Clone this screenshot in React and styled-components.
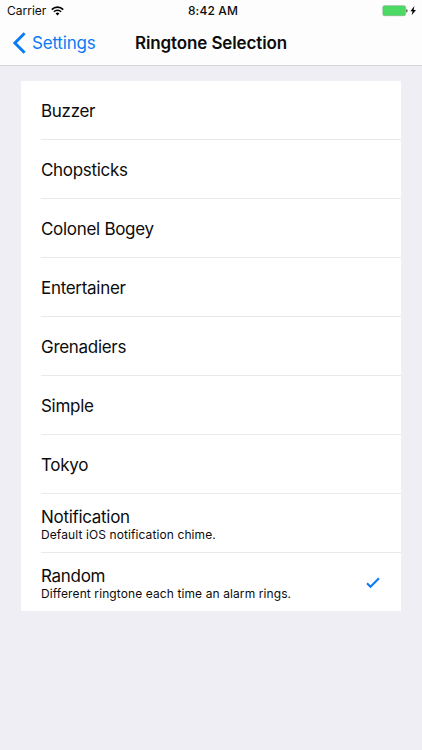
import React from 'react';
import styled, { createGlobalStyle } from 'styled-components';

const GlobalStyle = createGlobalStyle`
  * {
    box-sizing: border-box;
  }

  body {
    margin: 0;
    background-color: #efeef4;
    color: #0c0c0c;
    font-family: Inter, 'Liberation Sans', sans-serif;
  }
`;

const StyledScreen = styled.div`
  min-height: 750px;
  background-color: #efeef4;
`;

const StyledHeader = styled.header`
  height: 66px;
  background-color: #fdfdfd;
  border-bottom: 1px solid #d6d6da;
`;

const StyledStatusBar = styled.div`
  display: grid;
  grid-template-columns: 1fr auto 1fr;
  align-items: center;
  height: 22px;
  padding: 0 5px 0 7px;
  font-size: 12px;
  line-height: 22px;
`;

const StyledCarrier = styled.div`
  display: flex;
  align-items: center;
  gap: 5px;
`;

const StyledTime = styled.div`
  padding-left: 2px;
  font-weight: 500;
  letter-spacing: 0.15px;
`;

const StyledBattery = styled.div`
  display: flex;
  align-items: center;
  justify-content: flex-end;
`;

const StyledNavBar = styled.nav`
  display: grid;
  grid-template-columns: 1fr auto 1fr;
  align-items: center;
  height: 42px;
  padding: 0 13px;
`;

const StyledBack = styled.a`
  display: flex;
  align-items: center;
  gap: 6px;
  color: #0b7bf5;
  font-size: 17px;
  letter-spacing: -0.2px;
`;

const StyledTitle = styled.h1`
  margin: 0;
  font-size: 17px;
  font-weight: 600;
  letter-spacing: -0.12px;
`;

const StyledList = styled.ul`
  margin: 15px 21px 0;
  padding: 0 0 0 20px;
  background-color: #fff;
  list-style: none;
`;

const StyledRow = styled.li`
  display: flex;
  align-items: center;
  justify-content: space-between;
  height: 59px;
  padding: 2px 21px 0 0;
  border-bottom: 1px solid #e9e9eb;

  &:last-child {
    height: 58px;
    border-bottom: none;
  }
`;

const StyledName = styled.div`
  font-size: 17px;
  line-height: 20px;
  letter-spacing: -0.3px;
`;

const StyledDetail = styled.div`
  font-size: 12px;
  line-height: 15px;
  letter-spacing: 0.1px;
`;

const ringtones = [
  { name: 'Buzzer' },
  { name: 'Chopsticks' },
  { name: 'Colonel Bogey' },
  { name: 'Entertainer' },
  { name: 'Grenadiers' },
  { name: 'Simple' },
  { name: 'Tokyo' },
  { name: 'Notification', detail: 'Default iOS notification chime.' },
  {
    name: 'Random',
    detail: 'Different ringtone each time an alarm rings.',
    selected: true,
  },
];

const WifiIcon = () => (
  <svg width='13' height='10' viewBox='0 0 13 10' fill='none' stroke='#000'>
    <path d='M0.8 3.6a8 8 0 0 1 11.4 0' strokeWidth='1.7' />
    <path d='M2.9 5.8a5.1 5.1 0 0 1 7.2 0' strokeWidth='1.5' />
    <path d='M6.5 9.4 4.6 7.5a2.7 2.7 0 0 1 3.8 0z' fill='#000' stroke='none' />
  </svg>
);

const BatteryIcon = () => (
  <svg width='35' height='12' viewBox='0 0 35 12'>
    <rect x='0.8' y='0.7' width='22.8' height='10' rx='1.6' fill='#4cd964' stroke='#7fae86' strokeWidth='0.6' />
    <path d='M24.4 3.9c1.5 0.4 1.5 3.2 0 3.6z' fill='#222' />
    <path d='M32.4 0.9 28.4 6.3h2.2L29.6 10.3 34 4.9h-2.4z' fill='#000' />
  </svg>
);

const BackIcon = () => (
  <svg width='13' height='22' viewBox='0 0 13 22' fill='none'>
    <path d='M11.6 1.3 1.9 11l9.7 9.7' stroke='#0b7bf5' strokeWidth='2.9' />
  </svg>
);

const CheckIcon = () => (
  <svg width='14' height='12' viewBox='0 0 14 12' fill='none'>
    <path d='M1 6.3 4.5 9.7 13 1.3' stroke='#0b7bf5' strokeWidth='2.1' />
  </svg>
);

const App = () => {
  return (
    <StyledScreen>
      <GlobalStyle />
      <StyledHeader>
        <StyledStatusBar>
          <StyledCarrier>
            Carrier
            <WifiIcon />
          </StyledCarrier>
          <StyledTime>8:42 AM</StyledTime>
          <StyledBattery>
            <BatteryIcon />
          </StyledBattery>
        </StyledStatusBar>
        <StyledNavBar>
          <StyledBack>
            <BackIcon />
            Settings
          </StyledBack>
          <StyledTitle>Ringtone Selection</StyledTitle>
        </StyledNavBar>
      </StyledHeader>
      <StyledList>
        {ringtones.map(({ name, detail, selected }) => (
          <StyledRow key={name}>
            <div>
              <StyledName>{name}</StyledName>
              {detail && <StyledDetail>{detail}</StyledDetail>}
            </div>
            {selected && <CheckIcon />}
          </StyledRow>
        ))}
      </StyledList>
    </StyledScreen>
  );
};

export default App;
